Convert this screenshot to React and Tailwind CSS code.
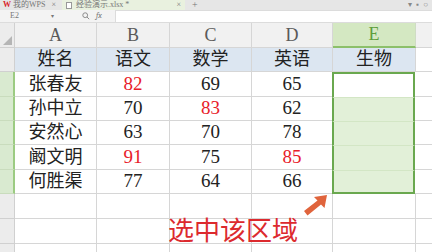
import React from 'react'

const cols = ['A', 'B', 'C', 'D', 'E']
const widths = ['w-[82px]', 'w-[73px]', 'w-[82px]', 'w-[81px]', 'w-[83px]']
const head = ['姓名', '语文', '数学', '英语', '生物']
const data = [
  ['张春友', 82, 69, 65],
  ['孙中立', 70, 83, 62],
  ['安然心', 63, 70, 78],
  ['阚文明', 91, 75, 85],
  ['何胜渠', 77, 64, 66],
]
const red = { '0-1': true, '1-2': true, '3-1': true, '3-3': true }
const dataH = ['h-[25px]', 'h-[24px]', 'h-[24px]', 'h-[25px]', 'h-[24px]']
const emptyH = ['h-[25px]', 'h-[25px]', 'h-[25px]']

const cell = 'shrink-0 border-r border-b border-[#d6d6d6] flex items-center justify-center'

function TopBar() {
  return (
    <div className="h-[10px] bg-[#e6e6e6] flex text-[8px] leading-none text-[#777] overflow-hidden whitespace-nowrap">
      <div className="flex items-center h-full pl-[3px] w-[62px] gap-[2px]">
        <span className="text-[#d9262b] font-bold">W</span>
        <span>我的WPS</span>
        <span className="ml-auto mr-[6px]">×</span>
      </div>
      <div className="flex items-center h-full w-[123px] bg-[#e9f1df] pl-[4px] gap-[4px]">
        <span className="w-[6px] h-[7px] border border-[#999] bg-white" />
        <span>经验演示.xlsx *</span>
        <span className="ml-auto mr-[4px]">×</span>
      </div>
      <span className="ml-[7px] text-[10px] self-center">+</span>
      <div className="ml-auto mr-[4px] flex gap-[4px] items-center text-[#888]">
        <span>▾</span><span>▪</span><span>○</span>
      </div>
    </div>
  )
}

function FormulaBar() {
  return (
    <div className="h-[13px] flex bg-[#f3f3f3] border-b border-[#dcdcdc] text-[8px] text-[#777] leading-none">
      <div className="w-[58px] flex items-center pl-[10px]">
        <span>E2</span>
        <span className="ml-auto mr-[4px] text-[6px]">▾</span>
      </div>
      <div className="w-[57px] flex items-center gap-[6px] pl-[24px]">
        <svg width="8" height="8" viewBox="0 0 10 10" fill="none" stroke="#888" strokeWidth="1.2">
          <circle cx="4" cy="4" r="3" />
          <path d="M6.3 6.3L9 9" />
        </svg>
        <span className="italic font-serif">fx</span>
      </div>
      <div className="flex-1 bg-white border-l border-t border-[#dcdcdc]" />
    </div>
  )
}

function RowHead({ h, sel }) {
  return sel
    ? <div className={`${h} w-[15px] shrink-0 bg-[#d9ead0] border-r-2 border-b border-r-[#9ccb82] border-b-[#c9dcbd]`} />
    : <div className={`${h} w-[15px] shrink-0 bg-[#ececec] border-r border-b border-[#d0d0d0]`} />
}

export default function App() {
  return (
    <div className="w-[432px] h-[252px] overflow-hidden bg-white" style={{ fontFamily: '"Liberation Serif", "Noto Sans CJK SC", serif' }}>
      <TopBar />
      <FormulaBar />
      <div className="relative text-[#222]">
        {/* column header row */}
        <div className="flex h-[25px]">
          <div className="w-[15px] shrink-0 bg-[#ececec] border-r border-b border-[#d0d0d0] flex items-end justify-end p-[2px]">
            <div className="w-0 h-0 border-l-[9px] border-l-transparent border-b-[9px] border-b-[#b5b5b5]" />
          </div>
          {cols.map((c, j) => (
            <div key={c}
              className={c === 'E'
                ? `${widths[j]} shrink-0 bg-[#d4e8c2] border-r border-b-2 border-r-[#cfdcc4] border-b-[#8cc06a] flex items-center justify-center text-[18px] text-[#5e9e3c]`
                : `${widths[j]} shrink-0 bg-[#f1f1f1] border-r border-b border-[#d6d6d6] flex items-center justify-center text-[18px] text-[#5a5a5a]`}>
              {c}
            </div>
          ))}
          <div className="flex-1 bg-[#f1f1f1] border-b border-[#d6d6d6]" />
        </div>

        {/* row 1 */}
        <div className="flex h-[24px]">
          <RowHead h="h-[24px]" />
          {head.map((t, j) => (
            <div key={t} className={`${cell} ${widths[j]} bg-[#dce6f1] text-[18px]`}>{t}</div>
          ))}
          <div className="flex-1 border-b border-[#d6d6d6]" />
        </div>

        {/* data rows */}
        {data.map((r, i) => (
          <div key={i} className={`flex ${dataH[i]}`}>
            <RowHead h={dataH[i]} sel />
            {r.map((v, j) => (
              <div key={j} className={`${cell} ${widths[j]} ${j === 0 ? 'text-[18px]' : 'text-[19px]'} ${red[`${i}-${j}`] ? 'text-[#e8202a]' : ''}`}>{v}</div>
            ))}
            <div className={`shrink-0 w-[83px] -ml-px border-x-2 border-[#6aa84f] ${i === 0 ? 'border-t-2 bg-white' : 'bg-[#e2f0d8] border-t border-t-[#d3e6c5]'} ${i === 4 ? 'border-b-2' : ''}`} />
            <div className="flex-1 border-b border-[#d6d6d6]" />
          </div>
        ))}

        {/* empty rows */}
        {emptyH.map((h, k) => (
          <div key={k} className={`flex ${h}`}>
            <RowHead h={h} />
            {widths.map((w, j) => <div key={j} className={`${cell} ${w}`} />)}
            <div className="flex-1 border-b border-[#d6d6d6]" />
          </div>
        ))}

        {/* arrow annotation */}
        <svg className="absolute left-[303px] top-[172px]" width="25" height="21" viewBox="0 0 25 21">
          <path d="M24 0 L11 2 L14.5 5.5 L1 16 L4.5 20.5 L18 9.5 L21.5 13 Z" fill="#e0643c" />
        </svg>

        {/* caption */}
        <div className="absolute left-[168px] top-[196px] text-[26px] leading-none text-[#dc2a2e] whitespace-nowrap">
          选中该区域
        </div>
      </div>
    </div>
  )
}
